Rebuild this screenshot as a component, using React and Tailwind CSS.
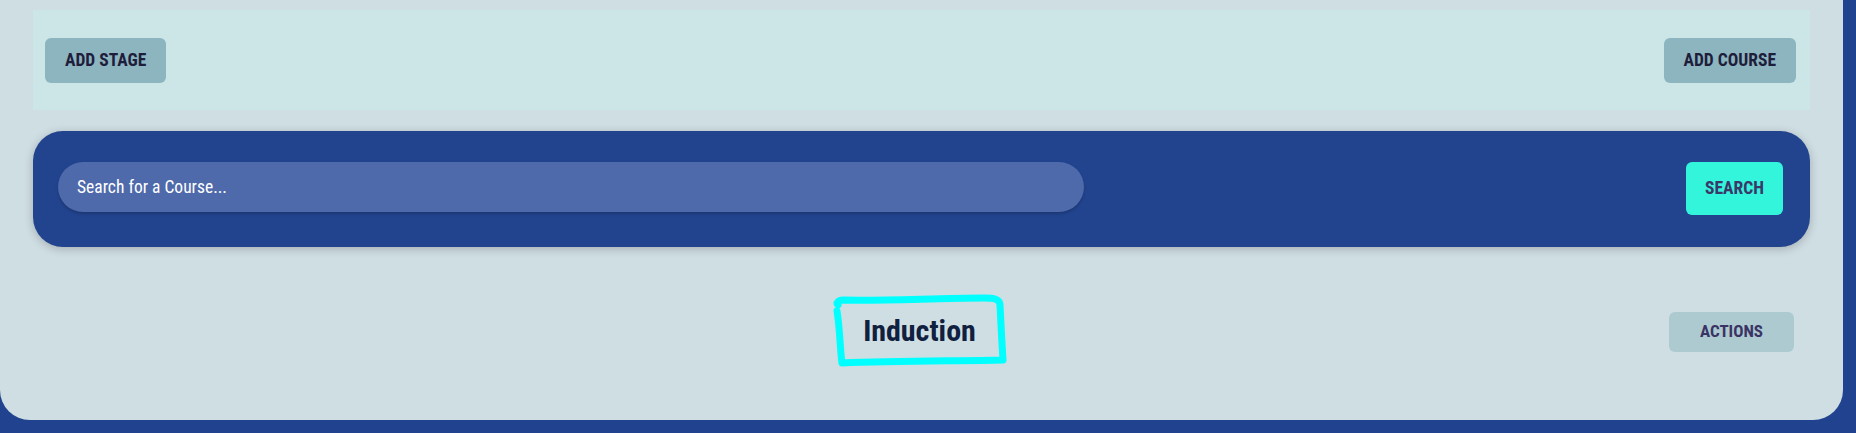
import React from 'react';

const font = { fontFamily: '"Roboto Condensed", "Liberation Sans Narrow", "DejaVu Sans Condensed", Roboto, sans-serif' };

function Scribble() {
  // hand-drawn highlight around the stage title
  return (
    <svg
      className="pointer-events-none absolute left-[826px] top-[289px]"
      width="190"
      height="84"
      viewBox="0 0 190 84"
      fill="none"
    >
      <path
        d="M12 16 C10 14 12 11 17 11 C60 12 110 9 158 9 C168 9 174 10 174 16 C175 36 176 56 177 71 C130 72 70 72 16 74 C14 60 14 40 11 22"
        stroke="#00ffff"
        strokeWidth="7"
        strokeLinecap="round"
        strokeLinejoin="round"
      />
    </svg>
  );
}

export default function App() {
  return (
    <div className="relative h-[433px] w-full overflow-hidden bg-[#21438f]" style={font}>
      <div className="h-[420px] w-[1843px] rounded-b-[30px] bg-[#cfdee3] px-[33px] pt-[10px]">
        {/* toolbar */}
        <div className="flex h-[100px] items-center justify-between bg-[#cce5e6] pl-[12px] pr-[14px]">
          <button className="h-[45px] rounded-md bg-[#8db5bf] px-5 text-[17.5px] font-bold uppercase text-[#1e1e3c]">
            Add Stage
          </button>
          <button className="h-[45px] rounded-md bg-[#8db5bf] px-5 text-[17.5px] font-bold uppercase text-[#1e1e3c]">
            Add Course
          </button>
        </div>

        {/* search */}
        <div className="mt-[21px] flex h-[116px] items-start justify-between rounded-[30px] bg-[#22448f] pl-[25px] pr-[27px] pt-[31px] shadow-[0_2px_10px_rgba(0,0,0,0.22)]">
          <input
            type="text"
            placeholder="Search for a Course..."
            className="h-[50px] w-[1026px] rounded-full bg-[#4e6aab] px-[19px] text-[17.5px] text-white shadow-[0_2px_3px_rgba(0,0,0,0.2)] outline-none placeholder:text-white"
            style={font}
          />
          <button className="h-[53px] w-[97px] rounded-md bg-[#33f5dc] text-[17.5px] font-bold uppercase text-[#3a3868]">
            Search
          </button>
        </div>

        {/* stage row */}
        <div className="relative mt-[65px] flex h-[40px] items-center justify-center pr-[4px]">
          <h2 className="-mt-[4px] text-[30px] font-bold text-[#10203f]">Induction</h2>
          <button className="absolute right-[16px] top-0 h-[40px] w-[125px] rounded-md bg-[#adcad0] text-[17px] font-bold uppercase text-[#3a3464]">
            Actions
          </button>
        </div>
      </div>
      <Scribble />
    </div>
  );
}
